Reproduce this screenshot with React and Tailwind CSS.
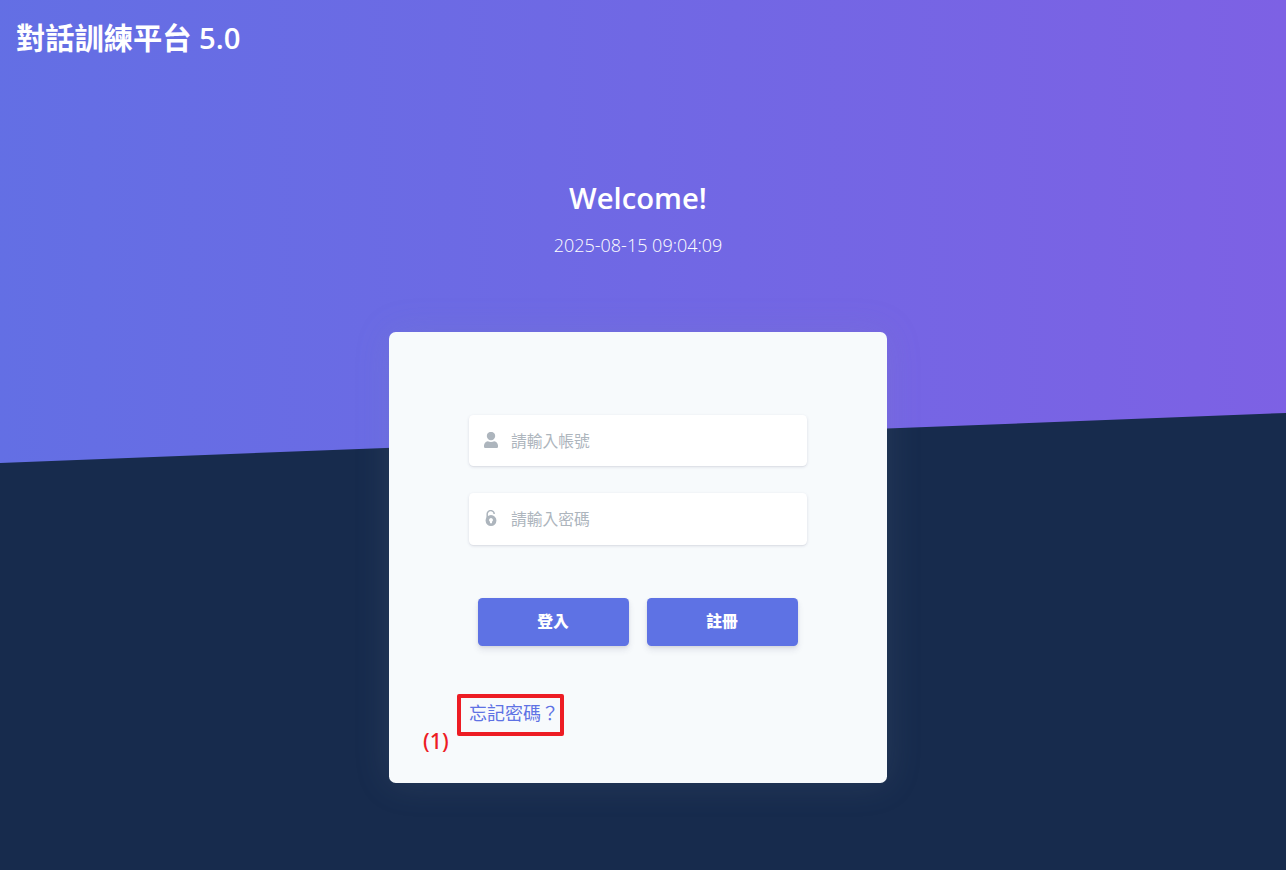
import React from 'react';

function UserIcon() {
  return (
    <svg className="-mt-[2px] h-4 w-[14px]" viewBox="0 0 14 16" fill="currentColor" aria-hidden="true">
      <circle cx="7" cy="4" r="4.200" />
      <path d="M3.800 9.200C5.500 10.100 8.500 10.100 10.200 9.200C12.500 9.600 14 11.500 14 13.600v1.200a1.200 1.200 0 0 1-1.200 1.200H1.200A1.200 1.200 0 0 1 0 14.800v-1.200C0 11.500 1.500 9.600 3.800 9.200z" />
    </svg>
  );
}

function LockOpenIcon() {
  return (
    <svg className="-mt-[2px] h-4 w-[14px]" viewBox="0 0 14 16" fill="none" aria-hidden="true">
      <path d="M3.200 8V4.200a3.500 3.500 0 0 1 7-.2" stroke="currentColor" strokeWidth="1.500" />
      <path fill="currentColor" fillRule="evenodd" d="M7 5.100a5.450 5.450 0 1 0 0 10.900A5.450 5.450 0 0 0 7 5.100zm0 3a2 2 0 0 1 1 3.700V13.300H6v-1.500A2 2 0 0 1 7 8.100z" />
    </svg>
  );
}

function Field({ icon, className, ...props }) {
  return (
    <label className={`flex items-center rounded-[4.500px] bg-white pl-[15px] text-[#adb5bd] shadow-[0_1px_3px_rgba(50,50,93,0.15),0_1px_0_rgba(0,0,0,0.02)] ${className}`}>
      {icon}
      <input
        {...props}
        className="ml-[13px] h-full min-w-0 flex-1 bg-transparent text-[15.750px] text-[#525f7f] outline-none placeholder:text-[#adb5bd]"
      />
    </label>
  );
}

function ActionButton({ children }) {
  return (
    <button
      type="button"
      className="h-12 w-[151px] rounded-[4.500px] bg-[#5e72e4] pr-px pb-px text-[15.750px] font-black text-white shadow-[0_4px_6px_rgba(50,50,93,0.11),0_1px_3px_rgba(0,0,0,0.08)]"
    >
      {children}
    </button>
  );
}

export default function App() {
  return (
    <div className="grid h-[870px] w-full overflow-hidden bg-[#172b4d] font-['Open_Sans','Noto_Sans_CJK_TC',sans-serif]">
      <div className="col-start-1 row-start-1 h-[463px] bg-[linear-gradient(89deg,#636fe4_0%,#7d61e4_100%)] [clip-path:polygon(0_0,100%_0,100%_413px,0_100%)]" />
      <div className="z-10 col-start-1 row-start-1 flex flex-col">
        <header className="h-[178px] pl-[16px] pt-[16px]">
          <h1 className="text-[29.250px] leading-[44px] font-semibold text-white">
            <span className="font-bold">對話訓練平台</span> 5.0
          </h1>
        </header>
        <section className="mr-[10px] h-[154px] text-center text-white">
          <h2 className="text-[29.250px] leading-[40px] font-semibold">Welcome!</h2>
          <p className="mt-[14px] text-[18px] leading-[27px] font-light">2025-08-15 09:04:09</p>
        </section>
        <main className="relative ml-[389px] flex h-[451px] w-[498px] flex-col rounded-[6.750px] bg-[#f7fafc] pt-[83px] shadow-[0_0_36px_rgba(136,152,170,0.15)]">
          <form className="flex flex-col px-[80px]" onSubmit={(e) => e.preventDefault()}>
            <Field icon={<UserIcon />} className="h-[51px]" placeholder="請輸入帳號" type="text" />
            <Field icon={<LockOpenIcon />} className="mt-[27px] h-[52px]" placeholder="請輸入密碼" type="password" />
            <div className="mt-[53px] flex justify-center gap-[18px]">
              <ActionButton>登入</ActionButton>
              <ActionButton>註冊</ActionButton>
            </div>
          </form>
          <a href="#" className="ml-[68px] mt-[48px] flex h-[42px] w-[107px] rounded-[2px] border-4 border-[#ed1c24] pl-[8px] pt-[2px] text-[18px] leading-[27px] font-normal whitespace-nowrap text-[#5e72e4]">
            忘記密碼？
          </a>
          <span className="absolute left-[34px] top-[395px] font-['Noto_Sans',sans-serif] text-[21.500px] leading-[28px] font-medium text-[#ed1c24]">(1)</span>
        </main>
      </div>
    </div>
  );
}
